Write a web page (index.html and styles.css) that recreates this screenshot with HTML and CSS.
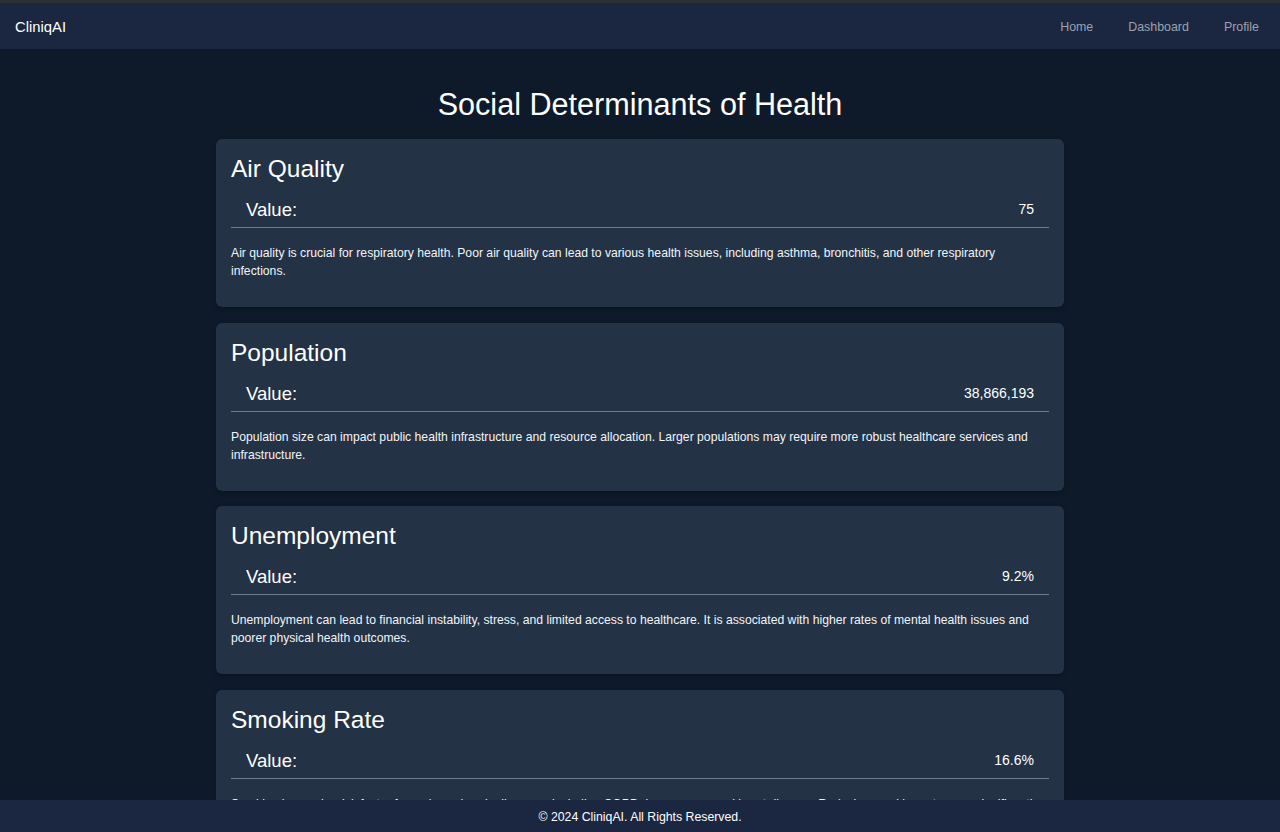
FILE: index.html
```html
<!DOCTYPE html>
<html lang="en">
<head>
<meta charset="utf-8">
<title>CliniqAI - Social Determinants of Health</title>
<link rel="stylesheet" href="styles.css">
</head>
<body>
<div class="topstrip"></div>
<header class="navbar">
  <div class="brand">CliniqAI</div>
  <nav class="links">
    <a href="#">Home</a>
    <a href="#">Dashboard</a>
    <a href="#">Profile</a>
  </nav>
</header>
<main class="main">
  <h1 class="page-title">Social Determinants of Health</h1>
  <section class="card">
    <h2 class="card-title">Air Quality</h2>
    <div class="value-row"><span class="value-label">Value:</span><span class="value-num">75</span></div>
    <p class="desc">Air quality is crucial for respiratory health. Poor air quality can lead to various health issues, including asthma, bronchitis, and other respiratory infections.</p>
  </section>
  <section class="card">
    <h2 class="card-title">Population</h2>
    <div class="value-row"><span class="value-label">Value:</span><span class="value-num">38,866,193</span></div>
    <p class="desc">Population size can impact public health infrastructure and resource allocation. Larger populations may require more robust healthcare services and infrastructure.</p>
  </section>
  <section class="card">
    <h2 class="card-title">Unemployment</h2>
    <div class="value-row"><span class="value-label">Value:</span><span class="value-num">9.2%</span></div>
    <p class="desc">Unemployment can lead to financial instability, stress, and limited access to healthcare. It is associated with higher rates of mental health issues and poorer physical health outcomes.</p>
  </section>
  <section class="card">
    <h2 class="card-title">Smoking Rate</h2>
    <div class="value-row"><span class="value-label">Value:</span><span class="value-num">16.6%</span></div>
    <p class="desc">Smoking is a major risk factor for various chronic diseases, including COPD, lung cancer, and heart disease. Reducing smoking rates can significantly improve public health outcomes.</p>
  </section>
</main>
<footer class="footer">© 2024 CliniqAI. All Rights Reserved.</footer>
</body>
</html>
```
FILE: styles.css
```css
html, body {
  margin: 0;
  padding: 0;
}
body {
  background: #0e1a29;
  color: #ffffff;
  font-family: "Liberation Sans", Arial, Helvetica, sans-serif;
  height: 832px;
  overflow: hidden;
}
.topstrip {
  height: 3px;
  background: #2c2f33;
}
.navbar {
  box-sizing: border-box;
  height: 46px;
  background: #1b2640;
  display: flex;
  align-items: center;
  justify-content: space-between;
  padding: 1px 21px 0 15px;
}
.brand {
  font-size: 14.8px;
  color: #ffffff;
}
.links {
  display: flex;
  gap: 35px;
}
.links a {
  color: #9aa3b0;
  text-decoration: none;
  font-size: 12.4px;
}
.main {
  width: 848px;
  margin: 0 auto;
  padding-top: 37px;
}
.page-title {
  margin: 0 0 16px;
  height: 37px;
  font-size: 30.6px;
  font-weight: normal;
  line-height: 37px;
  text-align: center;
  color: #ffffff;
}
.card {
  box-sizing: border-box;
  height: 168px;
  background: #233245;
  border-radius: 6px;
  padding: 15px 15px 0;
  margin-bottom: 15.5px;
  box-shadow: 0 2px 4px rgba(0,0,0,0.25);
  overflow: hidden;
}
.card-title {
  margin: 0;
  height: 30px;
  font-size: 24.5px;
  font-weight: normal;
  line-height: 30px;
}
.value-row {
  box-sizing: border-box;
  height: 40px;
  display: flex;
  justify-content: space-between;
  align-items: center;
  margin-top: 4px;
  padding: 10px 15px 6px;
  border-bottom: 1px solid #6f7d8c;
}
.value-label {
  font-size: 18.5px;
  line-height: 23px;
}
.value-num {
  font-size: 14px;
  line-height: 23px;
}
.desc {
  margin: 16px 0 0;
  height: 36px;
  font-size: 12.2px;
  line-height: 18px;
  color: #f2f4f7;
}
.footer {
  box-sizing: border-box;
  position: fixed;
  left: 0;
  right: 0;
  bottom: 0;
  height: 32px;
  padding-top: 2px;
  background: #1b2640;
  color: #ffffff;
  font-size: 12.3px;
  display: flex;
  align-items: center;
  justify-content: center;
}
```
